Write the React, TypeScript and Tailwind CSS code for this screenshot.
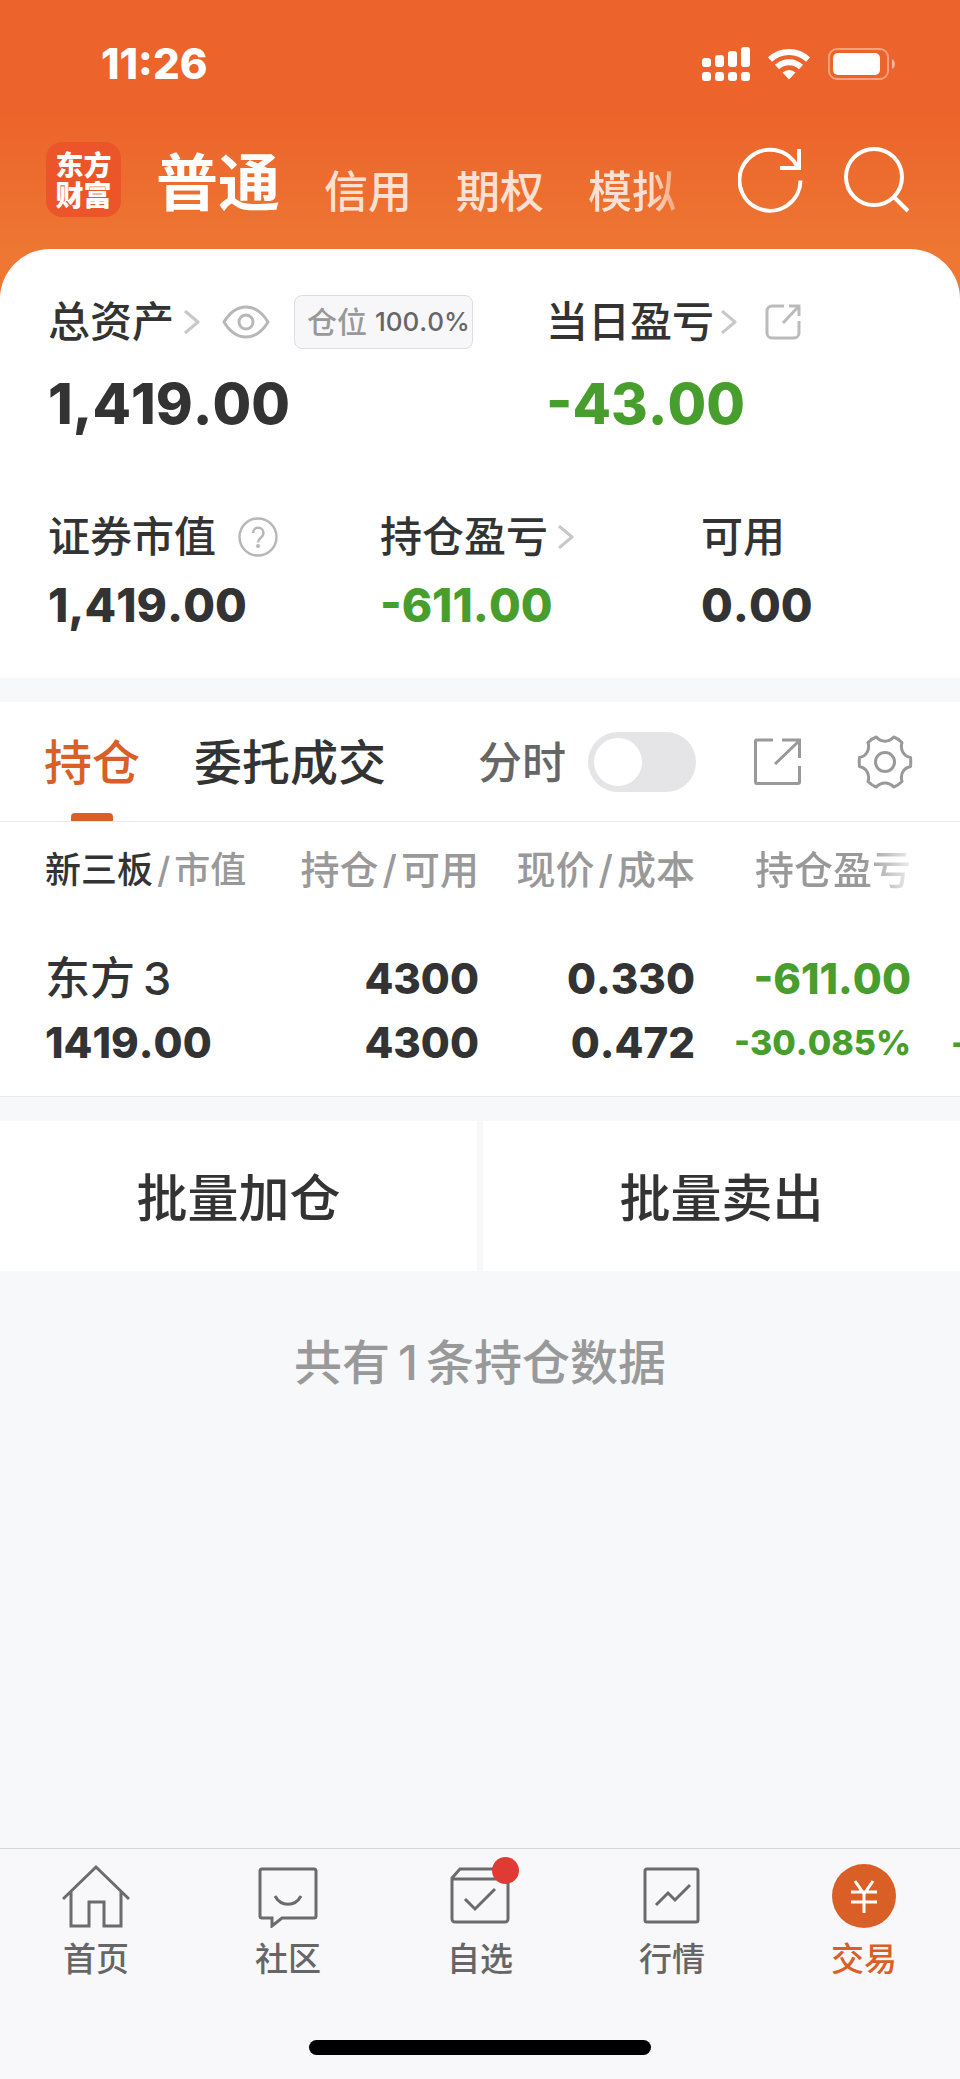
import type { ReactNode } from "react";

const font = "font-[Inter,'Noto_Sans_CJK_SC',sans-serif]";

function StatusIcons() {
  return (
    <div className="flex items-center gap-[18px]">
      <svg width="48" height="36" viewBox="0 0 48 36" fill="#fff">
        <rect x="0" y="12" width="9" height="9" rx="3" />
        <rect x="13" y="9" width="9" height="12" rx="3" />
        <rect x="26" y="5" width="9" height="16" rx="3" />
        <rect x="39" y="1" width="9" height="20" rx="3" />
        <rect x="0" y="26" width="9" height="9" rx="3" />
        <rect x="13" y="26" width="9" height="9" rx="3" />
        <rect x="26" y="26" width="9" height="9" rx="3" />
        <rect x="39" y="26" width="9" height="9" rx="3" />
      </svg>
      <svg width="42" height="32" viewBox="0 0 42 32" fill="none">
        <path d="M2 11.500A27.500 27.500 0 0 1 40 11.500" stroke="#fff" strokeWidth="6" />
        <path d="M9 19A17.500 17.500 0 0 1 33 19" stroke="#fff" strokeWidth="6" />
        <path d="M14.500 24.500A9.500 9.500 0 0 1 27.500 24.500L21 31.500Z" fill="#fff" />
      </svg>
      <svg width="68" height="34" viewBox="0 0 68 34" fill="none">
        <rect x="1" y="2" width="59" height="30" rx="8" stroke="#fff" strokeOpacity=".4" strokeWidth="2" />
        <rect x="5" y="6" width="47" height="22" rx="5" fill="#fff" />
        <path d="M64 12c4 2 4 8 0 10z" fill="#fff" fillOpacity=".5" />
      </svg>
    </div>
  );
}

function Chevron() {
  return (
    <svg width="16" height="24" viewBox="0 0 16 24" fill="none" stroke="#c8c8c8" strokeWidth="3">
      <path d="M1 1l13 11L1 23" strokeLinejoin="round" />
    </svg>
  );
}

function GearIcon() {
  return (
    <svg width="56" height="56" viewBox="-28 -28 56 56" fill="none" stroke="#999" strokeWidth="3" strokeLinejoin="round">
      <path d="M25.500 -4.500Q26 0 25.500 4.500C18 6 15 13 17 19.500Q13 23.500 8.700 25C4 19.500 -4 19.500 -8.700 25Q-13 23.500 -17 19.500C-15 13 -18 6 -25.500 4.500Q-26 0 -25.500 -4.500C-18 -6 -15 -13 -17 -19.500Q-13 -23.500 -8.700 -25C-4 -19.500 4 -19.500 8.700 -25Q13 -23.500 17 -19.500C15 -13 18 -6 25.500 -4.500Z" />
      <circle r="9.500" />
    </svg>
  );
}

function Slash() {
  return <span className="mx-1">/</span>;
}

function Figure({ label, value, className = "text-[#333]", children }: { label: string; value: string; className?: string; children?: ReactNode }) {
  return (
    <div>
      <div className="flex h-10 items-center text-[42px] leading-10 font-medium text-[#333]">{label}{children}</div>
      <p className={`mt-6 text-[46px] leading-12 font-extrabold ${className}`}>{value}</p>
    </div>
  );
}

const navItems: Array<{ label: string; icon: ReactNode; active?: boolean; badge?: boolean }> = [
  {
    label: "首页",
    icon: <path d="M1 35L34 3l33 32M9 28v34h18V38h15v24h17V28" />,
  },
  {
    label: "社区",
    icon: <><path d="M8 5h52a2 2 0 0 1 2 2v45a2 2 0 0 1-2 2H28l-10 8v-8H8a2 2 0 0 1-2-2V7a2 2 0 0 1 2-2z" /><path d="M21 32c6 11 20 11 26 0" /></>,
  },
  {
    label: "自选",
    badge: true,
    icon: <><path d="M6 14L14 5h40l8 9v41a3 3 0 0 1-3 3H9a3 3 0 0 1-3-3zM6 15h56" /><path d="M19 35l10 10 20-20" /></>,
  },
  {
    label: "行情",
    icon: <><rect x="7" y="5" width="53" height="53" rx="2" /><path d="M18 41l12-12 7 7 15-15" /></>,
  },
  {
    label: "交易",
    active: true,
    icon: <><circle cx="34" cy="32" r="32" fill="#d95f27" stroke="none" /><path d="M25 17l9 13 9-13M34 30v19M21 28h26M21 38h26" stroke="#fff" /></>,
  },
];

export default function App() {
  return (
    <div className={`flex min-h-screen flex-col overflow-hidden bg-[#f7f8fa] text-[#333] [font-kerning:none] ${font}`}>
      <header className="bg-linear-to-b from-[#ec642b] from-38% to-[#ed7733] to-85% pb-13">
        <div className="flex h-32 items-center justify-between pr-[64px] pl-[101px]">
          <time className="text-[42px] leading-12 font-extrabold text-white">11:26</time>
          <StatusIcons />
        </div>
        <div className="flex h-[103px] items-center pr-[50px] pl-[46px]">
          <div className="grid size-[75px] place-items-center rounded-2xl bg-[#eb5529] pt-[2px] text-[28px] leading-[30px] font-black text-white">
            <div>东方<br />财富</div>
          </div>
          <nav className="ml-[35px] flex items-end gap-11 pt-2 text-[44px] leading-14 font-medium text-[#fbe0d3]">
            <button type="button" className="text-[62px] leading-18 font-bold text-white">普通</button>
            <button type="button">信用</button>
            <button type="button">期权</button>
            <button type="button" className="bg-linear-to-r from-[#fbe0d3] from-70% to-[#f3a57a] bg-clip-text text-transparent">模拟</button>
          </nav>
          <div className="ml-auto flex gap-10">
            <button type="button" aria-label="刷新">
              <svg width="66" height="66" viewBox="0 0 66 66" fill="none" stroke="#fff" strokeWidth="4">
                <path d="M62.500 33.500A30.500 30.500 0 1 1 59.500 20" />
                <path d="M61 2v19H42" />
              </svg>
            </button>
            <button type="button" aria-label="搜索">
              <svg width="66" height="66" viewBox="0 0 66 66" fill="none" stroke="#fff" strokeWidth="4">
                <circle cx="30" cy="30" r="28" />
                <path d="M49 49l15 15" />
              </svg>
            </button>
          </div>
        </div>
        <div className="h-[18px]" />
      </header>

      <section className="-mt-13 rounded-t-[50px] bg-white pt-[46px] pb-[49px] pl-12">
        <div className="grid grid-cols-[498fr_414fr]">
          <div>
            <div className="flex h-[54px] items-center text-[42px] leading-10 font-medium">
              总资产
              <span className="ml-[10px]"><Chevron /></span>
              <button type="button" aria-label="隐藏金额" className="ml-[22px]">
                <svg width="48" height="34" viewBox="0 0 48 34" fill="none" stroke="#b8b8b8" strokeWidth="3">
                  <path d="M2 17C14 -3 34 -3 46 17C34 37 14 37 2 17Z" strokeLinejoin="round" />
                  <circle cx="24" cy="17" r="7" />
                </svg>
              </button>
              <span className="ml-6 flex h-[54px] items-center gap-2 rounded-lg border border-[#ddd] bg-[#f7f7fa] pl-3 text-[30px] whitespace-nowrap text-[#999]">
                仓位<span className="pr-[2px] text-[26px] text-[#666]">100.0%</span>
              </span>
            </div>
            <p className="mt-[25px] text-[56px] leading-15 font-extrabold">1,419.00</p>
          </div>
          <div>
            <div className="flex h-[54px] items-center text-[42px] leading-10 font-medium">
              当日盈亏
              <span className="ml-[7px]"><Chevron /></span>
              <button type="button" aria-label="分享盈亏" className="ml-7">
                <svg width="36" height="36" viewBox="0 0 36 36" fill="none" stroke="#bbb" strokeWidth="3">
                  <path d="M19 2H7a5 5 0 0 0-5 5v22a5 5 0 0 0 5 5h22a5 5 0 0 0 5-5V17M24 2h10v10M34 2L18 19" />
                </svg>
              </button>
            </div>
            <p className="mt-[25px] text-[56px] leading-15 font-extrabold text-[#489e2c]">-43.00</p>
          </div>
        </div>
        <div className="mt-[83px] grid grid-cols-[332fr_321fr_259fr]">
          <Figure label="证券市值" value="1,419.00">
            <button type="button" aria-label="说明" className="ml-[22px]">
              <svg width="40" height="40" viewBox="0 0 40 40" fill="none" stroke="#b8b8b8" strokeWidth="2.500">
                <circle cx="20" cy="20" r="18.500" />
                <path d="M15 16c0-7 10.500-7 10.500 0 0 5-5.500 4.500-5.500 9.500" />
                <circle cx="20" cy="29" r="2" fill="#b8b8b8" stroke="none" />
              </svg>
            </button>
          </Figure>
          <Figure label="持仓盈亏" value="-611.00" className="text-[#489e2c]"><span className="ml-[10px]"><Chevron /></span></Figure>
          <Figure label="可用" value="0.00" />
        </div>
      </section>

      <section className="mt-6 border-b border-[#e8e8e8] bg-white">
        <div className="flex h-30 border-b border-[#ebebeb] pr-[47px] pl-11 text-[48px] font-medium">
          <button type="button" className="relative pt-[2px] text-[#d95f27]">
            持仓
            <span className="absolute bottom-0 left-1/2 h-2 w-[42px] -translate-x-1/2 rounded-t-sm bg-[#d95f27]" />
          </button>
          <button type="button" className="ml-[54px] pt-[2px]">委托成交</button>
          <div className="ml-auto flex items-center">
            <label htmlFor="minute" className="pt-[2px] text-[44px] text-[#666]">分时</label>
            <input id="minute" type="checkbox" role="switch" className="ml-[22px] h-15 w-27 appearance-none rounded-full bg-[#e5e5e7] p-[6px] before:block before:size-12 before:rounded-full before:bg-white before:content-['']" />
            <button type="button" aria-label="分享持仓" className="ml-[57px]">
              <svg width="48" height="48" viewBox="0 0 48 48" fill="none" stroke="#999" strokeWidth="3">
                <path d="M20 2H4a1.500 1.500 0 0 0-1.500 1.500V44A1.500 1.500 0 0 0 4 45.500h41a1.500 1.500 0 0 0 1.500-1.500V28M29 2h17.500v18M46 3L22 26" />
              </svg>
            </button>
            <button type="button" aria-label="设置" className="ml-14"><GearIcon /></button>
          </div>
        </div>
        <table className="w-full table-fixed text-right text-[42px] leading-12 font-extrabold whitespace-nowrap">
          <thead className="text-[39px] text-[#999]">
            <tr className="h-24">
              <th scope="col" className="pl-[45px] text-left text-[36px] font-medium"><span className="text-[#333]">新三板</span><Slash />市值</th>
              <th scope="col" className="w-[216px] font-medium">持仓<Slash />可用</th>
              <th scope="col" className="w-[216px] font-medium">现价<Slash />成本</th>
              <th scope="col" className="w-[216px] font-medium">
                <span className="bg-linear-to-r from-[#999] from-70% to-[#eee] bg-clip-text text-transparent">持仓盈亏</span>
              </th>
              <td className="w-[49px]" />
            </tr>
          </thead>
          <tbody>
            <tr className="h-[92px]">
              <td className="pt-[29px] pl-[45px] text-left text-[45px] font-medium">东方<span className="ml-2">3</span></td>
              <td className="pt-[29px]">4300</td>
              <td className="pt-[29px]">0.330</td>
              <td className="pt-[29px] text-[#489e2c]">-611.00</td>
              <td />
            </tr>
            <tr className="h-[86px]">
              <td className="pb-5 pl-[45px] text-left">1419.00</td>
              <td className="pb-5">4300</td>
              <td className="pb-5">0.472</td>
              <td className="pb-5 text-[34px] text-[#489e2c]">-30.085%</td>
              <td className="overflow-hidden pb-5 pl-10 text-left text-[34px] text-[#489e2c]">-</td>
            </tr>
          </tbody>
        </table>
      </section>

      <div className="mt-6 grid grid-cols-2 gap-[6px] text-[51px] font-medium">
        <button type="button" className="h-[150px] bg-white pt-[6px]">批量加仓</button>
        <button type="button" className="h-[150px] bg-white pt-[6px]">批量卖出</button>
      </div>
      <p className="mt-[62px] text-center text-[48px] leading-15 font-medium text-[#999]">共有<span className="mx-2">1</span>条持仓数据</p>

      <footer className="mt-auto border-t border-[#d5d6d9] bg-[#f8f8fa] pt-[15px] pb-6">
        <nav className="grid grid-cols-5">
          {navItems.map((item) => (
            <a key={item.label} href="#" className={`flex flex-col items-center text-[33px] leading-12 font-medium ${item.active ? "text-[#d95f27]" : "text-[#666]"}`}>
              <span className="relative">
                <svg width="68" height="64" viewBox="0 0 68 64" fill="none" stroke="#6b6b6b" strokeWidth="3">{item.icon}</svg>
                {item.badge && <span className="absolute -top-[7px] right-[-5px] size-[27px] rounded-full bg-[#df3a33]" />}
              </span>
              <span className="mt-[7px]">{item.label}</span>
            </a>
          ))}
        </nav>
        <div className="mx-auto mt-[57px] h-[15px] w-[342px] rounded-full bg-black" />
      </footer>
    </div>
  );
}
